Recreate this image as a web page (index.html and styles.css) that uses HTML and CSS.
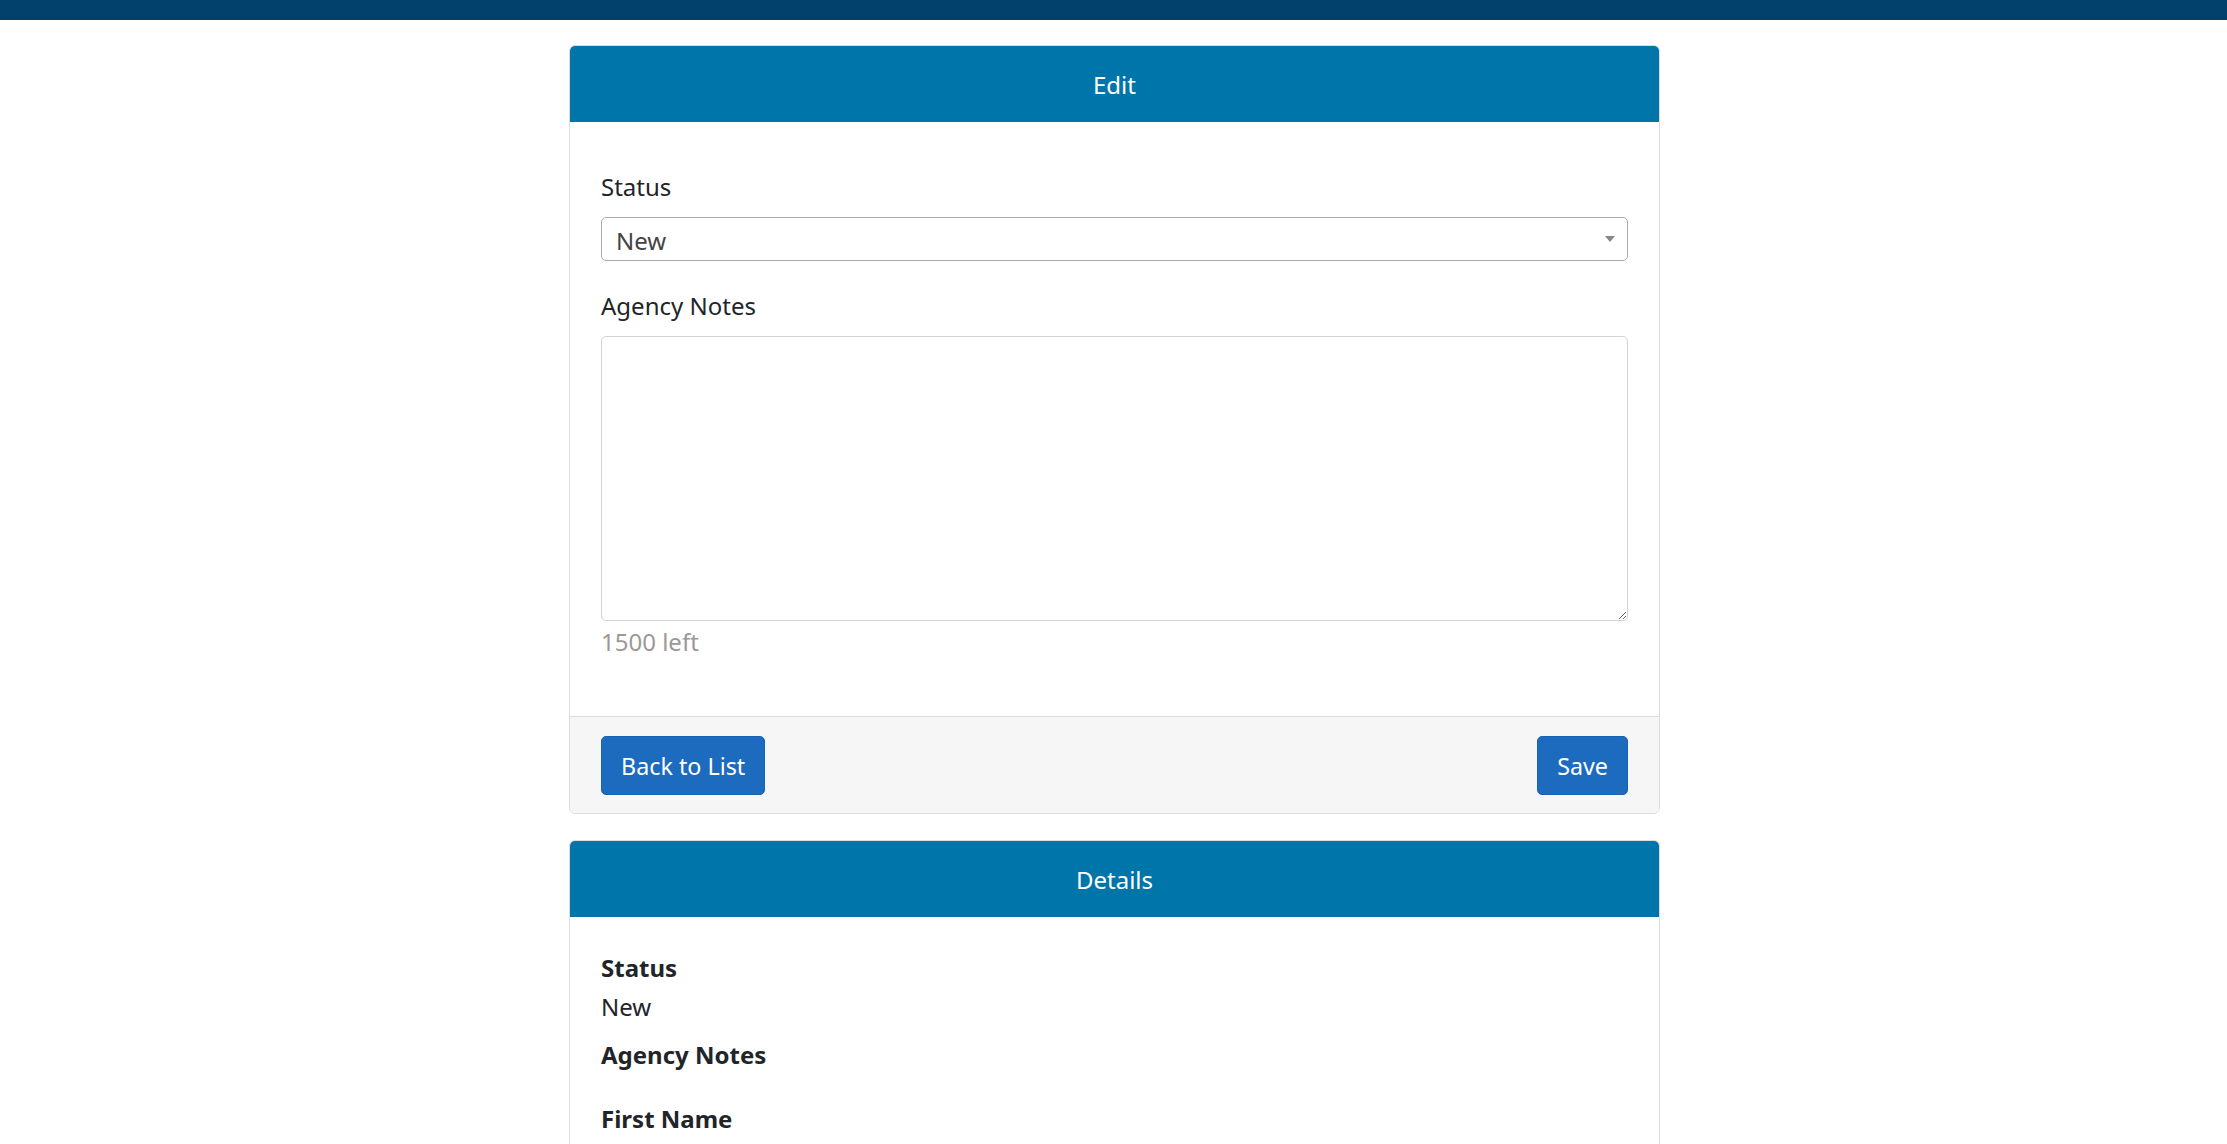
FILE: index.html
```html
<!DOCTYPE html>
<html lang="en">
<head>
<meta charset="utf-8">
<title>Edit</title>
<link rel="stylesheet" href="styles.css">
</head>
<body>
<div class="topbar"></div>
<main class="page">
  <section class="card">
    <div class="card-header">Edit</div>
    <div class="card-body">
      <div class="form-group">
        <label class="label">Status</label>
        <div class="select">
          <span class="select-value">New</span>
          <span class="select-arrow"></span>
        </div>
      </div>
      <div class="form-group">
        <label class="label">Agency Notes</label>
        <textarea class="textarea"></textarea>
        <div class="counter">1500 left</div>
      </div>
    </div>
    <div class="card-footer">
      <button class="btn">Back to List</button>
      <button class="btn">Save</button>
    </div>
  </section>

  <section class="card card-details">
    <div class="card-header">Details</div>
    <div class="card-body details-body">
      <dl class="details">
        <dt>Status</dt>
        <dd>New</dd>
        <dt>Agency Notes</dt>
        <dd class="empty"></dd>
        <dt>First Name</dt>
      </dl>
    </div>
  </section>
</main>
</body>
</html>
```

FILE: styles.css
```css
* { box-sizing: border-box; }

html, body {
  margin: 0;
  padding: 0;
  background: #ffffff;
}

body {
  font-family: "Noto Sans", "Open Sans", "Liberation Sans", sans-serif;
  font-size: 24px;
  line-height: 36px;
  color: #212529;
}

.topbar {
  height: 20px;
  background: #02416b;
}

.page {
  width: 1091px;
  margin: 25px auto 0;
  position: relative;
  left: 1px;
}

.card {
  border: 1px solid #dcdcdc;
  border-radius: 6px;
  overflow: hidden;
  background: #fff;
}

.card-details {
  margin-top: 26px;
  border-bottom: none;
  border-bottom-left-radius: 0;
  border-bottom-right-radius: 0;
}

.card-header {
  height: 77px;
  margin: -1px -1px 0;
  background: #0075aa;
  color: #ffffff;
  text-align: center;
  display: flex;
  align-items: center;
  justify-content: center;
  padding-top: 2px;
}

.card-body {
  padding: 47px 31px 56px;
}

.form-group + .form-group {
  margin-top: 27px;
}

.label {
  display: block;
  margin-bottom: 12px;
}

.select {
  height: 44px;
  border: 1px solid #aaaaaa;
  border-radius: 5px;
  display: flex;
  align-items: center;
  justify-content: space-between;
  padding: 3px 12px 0 14px;
  color: #444444;
}

.select-arrow {
  width: 0;
  height: 0;
  border-left: 5px solid transparent;
  border-right: 5px solid transparent;
  border-top: 6px solid #888888;
  margin-top: -4px;
}

.textarea {
  display: block;
  width: 100%;
  height: 285px;
  border: 1px solid #ced4da;
  border-radius: 5px;
  resize: vertical;
  font: inherit;
  margin: 0;
}

.counter {
  margin-top: 3px;
  color: #9c9896;
}

.card-footer {
  background: #f6f6f6;
  border-top: 1px solid #dcdcdc;
  padding: 19px 31px 18px;
  display: flex;
  justify-content: space-between;
}

.btn {
  height: 59px;
  padding: 0 19px;
  background: #1d6bbf;
  color: #ffffff;
  border: 1px solid #1a63b2;
  border-radius: 5px;
  font-family: inherit;
  font-size: 23.3px;
  line-height: 36px;
  cursor: pointer;
}

.details-body {
  padding: 33px 31px 200px;
}

.details {
  margin: 0;
}

.details dt {
  font-weight: 700;
  margin-bottom: 3px;
}

.details dd {
  margin: 0 0 12px;
}

.details dd.empty {
  min-height: 13px;
  margin-bottom: 12px;
}
```
